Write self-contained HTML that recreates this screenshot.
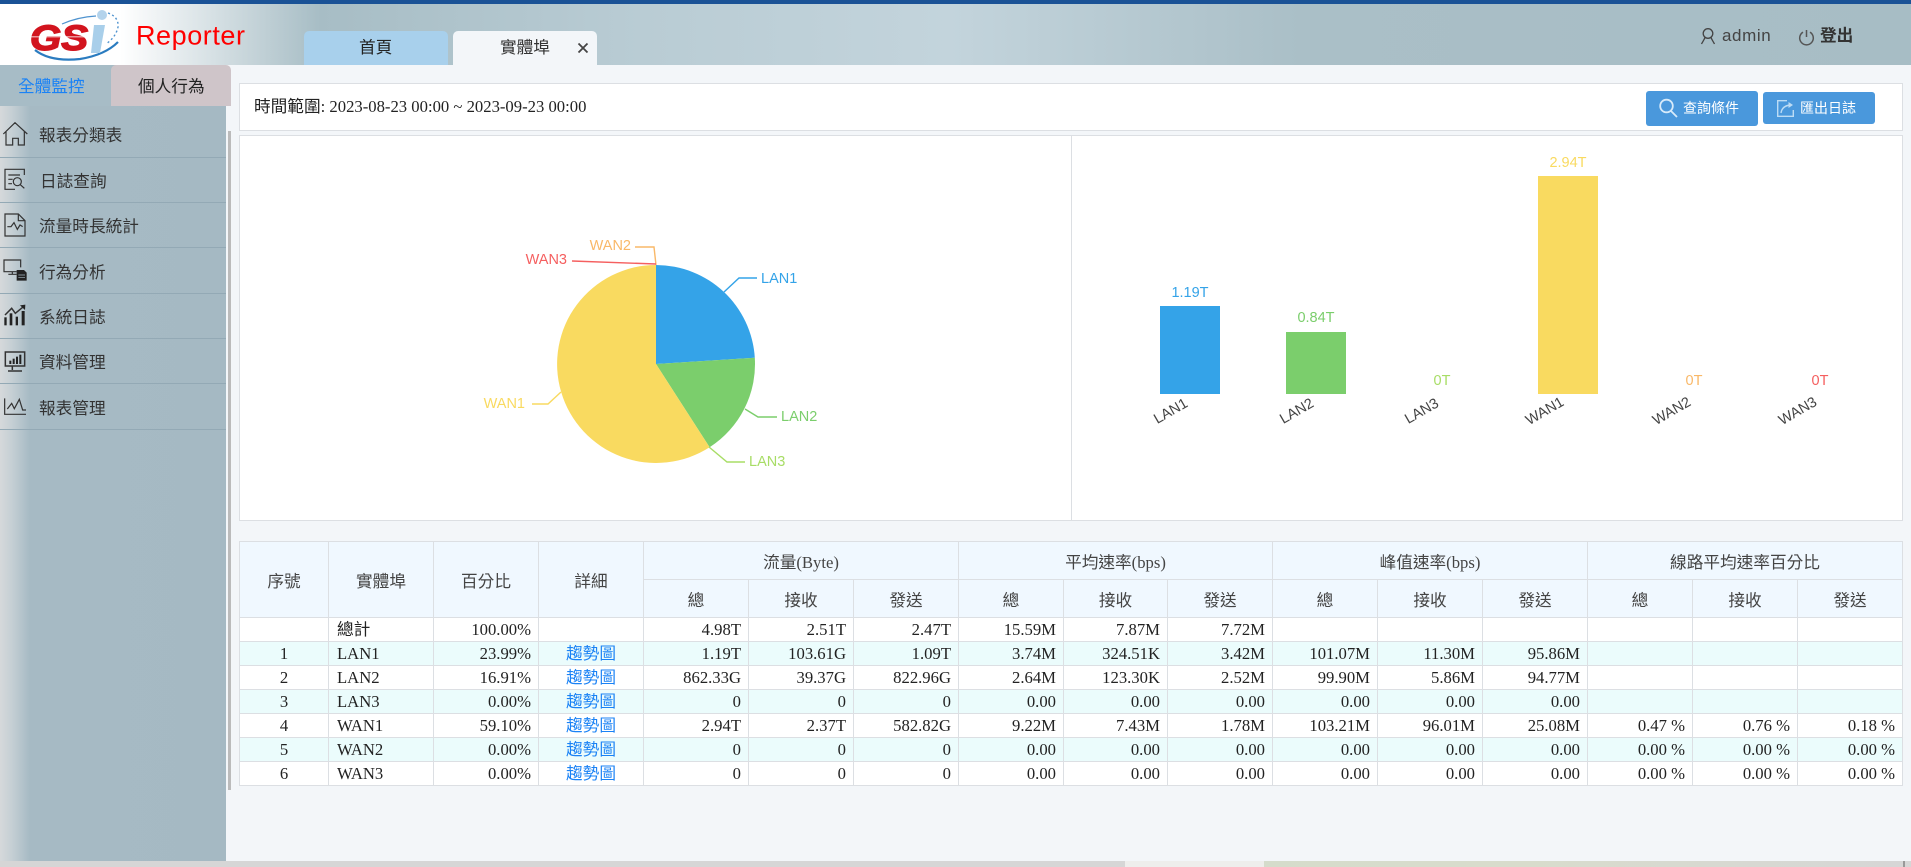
<!DOCTYPE html>
<html lang="zh-Hant"><head><meta charset="utf-8"><title>Reporter</title>
<style>
html,body{margin:0;padding:0;width:1911px;height:867px;overflow:hidden;background:#f3f6f9;font-family:"Liberation Sans","Noto Sans CJK TC",sans-serif;color:#333}
.a{position:absolute}
.t{position:absolute;white-space:nowrap;line-height:20px;font-size:16.67px}
#hdr{left:0;top:0;width:1911px;height:65px;background:linear-gradient(90deg,#fff 0,#fff 120px,#a7bdc5 320px,#b9ccd4 640px,#c3d4dc 950px,#aabfc7 1300px,#a7bdc5 1911px)}
#bar{left:0;top:0;width:1911px;height:4px;background:#1a5296}
.tab{position:absolute;top:31px;height:34px;width:144px;border-radius:5px 5px 0 0}
#side{left:0;top:106px;width:226px;height:755px;background:linear-gradient(90deg,#d6d9db 0,#c5cfd4 12px,#a6bac4 30px,#a5b9c3 226px)}
.ln{position:absolute;left:0;width:226px;height:1px;background:#93a9b5}
.p{position:absolute;background:#fff;border:1px solid #dcdfe3;box-sizing:border-box}
.btn{position:absolute;background:#4a98dc;border-radius:3px;color:#fff}
table{position:absolute;left:239px;top:541px;border-collapse:collapse;table-layout:fixed;width:1663px;font-family:"Liberation Serif","Noto Sans CJK TC",serif;font-size:16.67px;color:#222}
th,td{border:1px solid #dcdfe3;padding:0 7px 0 8px;overflow:hidden;white-space:nowrap}
th{background:#f0f8ff;font-weight:normal;color:#444;height:37px;padding:0}
td{height:23px;line-height:20px;text-align:right;background:#fff}
tr.o td{background:#ebfcfc}
td.c{text-align:center;padding:0}
td.l{text-align:left}
td a{color:#1a82f5;text-decoration:none}
svg text{font-family:"Liberation Sans",sans-serif}
</style></head><body>
<div class="a" id="hdr"></div><div class="a" id="bar"></div>

<svg class="a" style="left:0;top:0" width="260" height="65" viewBox="0 0 260 65">
<path d="M35 50Q50 62 80 59Q105 55 118 42" fill="none" stroke="#2b7cc0" stroke-width="2.200"/>
<path d="M62 24Q78 17 96 16" fill="none" stroke="#4f93cf" stroke-width="1.200"/>
<path d="M108 13Q119 17 118 27Q116 37 106 44" fill="none" stroke="#4f93cf" stroke-width="1.400" stroke-dasharray="2 2.500"/>
<path d="M94 25H105L100 53H91Z" fill="#a9cfea"/>
<circle cx="102" cy="15" r="5" fill="#b3d3ec"/>
<text x="30" y="50" font-size="35" font-weight="bold" font-style="italic" fill="#d2141e" stroke="#d2141e" stroke-width="1.400" textLength="58" lengthAdjust="spacingAndGlyphs">GS</text>
<rect x="29" y="36" width="58" height="1.500" fill="#fff" opacity=".55"/>
<text x="136" y="44.500" font-size="27" fill="#f00" textLength="109" lengthAdjust="spacing">Reporter</text>
</svg>

<div class="tab" style="left:304px;background:#a8d0ec"></div>
<div class="tab" style="left:453px;background:#f3f6f9"></div>
<div class="t" style="left:359px;top:38px;color:#222">首頁</div>
<div class="t" style="left:500px;top:38px;color:#333">實體埠</div>
<svg class="a" style="left:577px;top:42px" width="12" height="12"><path d="M1.500 1.500L10.500 10.500M10.500 1.500L1.500 10.500" stroke="#444" stroke-width="1.800"/></svg>

<svg class="a" style="left:1700px;top:27px" width="16" height="19" viewBox="0 0 16 19" fill="none" stroke="#444" stroke-width="1.300"><circle cx="8" cy="6.500" r="4.800"/><path d="M5 10.500C4 13 2.500 15 1.500 17M11 10.500C12 13 13.500 15 14.500 17"/></svg>
<div class="t" style="left:1722px;top:26px;letter-spacing:.6px;font-size:17px;color:#444">admin</div>
<svg class="a" style="left:1798px;top:29px" width="17" height="17" viewBox="0 0 17 17" fill="none" stroke="#555" stroke-width="1.500"><path d="M5 3.200A6.800 6.800 0 1 0 12 3.200"/><path d="M8.500 1V8"/></svg>
<div class="t" style="left:1820px;top:26px;font-weight:bold;color:#333">登出</div>

<div class="a" style="left:0;top:65px;width:226px;height:41px;background:#a7bcc6"></div>
<div class="a" style="left:111px;top:65px;width:120px;height:41px;background:#cfc5c9;border-radius:5px 5px 0 0"></div>
<div class="t" style="left:18px;top:77px;color:#1a82f5">全體監控</div>
<div class="t" style="left:138px;top:77px;color:#222">個人行為</div>
<div class="a" id="side"></div>
<div class="ln" style="top:157px"></div><div class="ln" style="top:202px"></div><div class="ln" style="top:247px"></div><div class="ln" style="top:293px"></div><div class="ln" style="top:338px"></div><div class="ln" style="top:383px"></div><div class="ln" style="top:429px"></div>
<div class="t" style="left:39px;top:126px">報表分類表</div>
<div class="t" style="left:40px;top:172px">日誌查詢</div>
<div class="t" style="left:39px;top:217px">流量時長統計</div>
<div class="t" style="left:39px;top:263px">行為分析</div>
<div class="t" style="left:39px;top:308px">系統日誌</div>
<div class="t" style="left:39px;top:353px">資料管理</div>
<div class="t" style="left:39px;top:399px">報表管理</div>
<svg class="a" style="left:0;top:110px" width="30" height="330" viewBox="0 0 90 990">
<g fill="none" stroke="#333" stroke-width="3.600">
<path d="M10 72L45 38L82 72M18 65V105H38V85H55V105H73V65"/>
<path d="M73 195V178H15V238H45M25 195H60M25 208H38M25 221H36"/><circle cx="52" cy="215" r="12"/><path d="M61 224L73 235"/>
<path d="M15 312H55L75 332V378H15ZM55 312V332H75M22 350H33L42 338L52 358L60 345L68 350"/>
<path d="M50 485H12V450H62V472M25 493H50M37 485V493"/>
<path d="M15 615L35 595L46 610L68 592" stroke-width="4.500"/>
<path d="M16 726H74V768H16ZM37 770V780M24 783H66" stroke-width="4.500"/>
<path d="M14 865V913H78M22 897L35 880L43 896L58 868L68 900H78"/>
</g>
<g fill="#222">
<path d="M50 480H72L80 488V512H50Z"/><path d="M55 495H75M55 503H75" stroke="#a5b9c3" stroke-width="2"/>
<path d="M60 586L76 584L75 600Z"/>
<rect x="13" y="622" width="7" height="24"/><rect x="29" y="610" width="8" height="36"/><rect x="47" y="620" width="7" height="26"/><rect x="65" y="603" width="9" height="43"/>
<rect x="28" y="752" width="6" height="10"/><rect x="38" y="746" width="6" height="16"/><rect x="48" y="740" width="6" height="22"/><rect x="58" y="734" width="6" height="28"/>
</g>
</svg>
<div class="a" style="left:228px;top:131px;width:3px;height:659px;background:#bbb"></div>

<div class="p" style="left:239px;top:83px;width:1664px;height:48px"></div>
<div class="t" style="left:254px;top:97px;font-family:'Liberation Serif','Noto Sans CJK TC',serif;color:#222">時間範圍: 2023-08-23 00:00 ~ 2023-09-23 00:00</div>
<div class="btn" style="left:1646px;top:91px;width:112px;height:35px"></div>
<div class="btn" style="left:1763px;top:92px;width:112px;height:32px"></div>
<svg class="a" style="left:1658px;top:96px" width="24" height="24" fill="none" stroke="#d8ebfa" stroke-width="1.800"><circle cx="8.500" cy="10" r="6.300"/><path d="M13 15L19 21"/></svg>
<svg class="a" style="left:1776px;top:99px" width="19" height="19" fill="none" stroke="#bcdcf5" stroke-width="1.400"><path d="M11 1.700H1.700V17.300H17.300V11"/><path d="M5 14Q6 7 14 6"/><path d="M12.500 3L17 6L12.500 9Z" fill="#bcdcf5" stroke="none"/></svg>
<div class="t" style="left:1683px;top:98px;font-size:14px;color:#fff">查詢條件</div>
<div class="t" style="left:1800px;top:98px;font-size:14px;color:#fff">匯出日誌</div>

<div class="p" style="left:239px;top:135px;width:1664px;height:386px"></div>
<div class="a" style="left:1071px;top:136px;width:1px;height:384px;background:#dcdfe3"></div>

<svg class="a" style="left:0;top:0" width="1911" height="867" viewBox="0 0 1911 867">
<path d="M656 364V265A99 99 0 0 1 754.800 357.700Z" fill="#34a3e8"/>
<path d="M656 364L754.800 357.700A99 99 0 0 1 709.600 447.300Z" fill="#7bce6c"/>
<path d="M656 364L709.600 447.300A99 99 0 1 1 656 265Z" fill="#f9da60"/>
<g fill="none" stroke-width="1.400">
<path d="M724 292L739 278H757" stroke="#34a3e8"/>
<path d="M745 409L758 417H777" stroke="#7bce6c"/>
<path d="M709 447L727 462H745" stroke="#a8dd66"/>
<path d="M561 392L548 404H532" stroke="#f9da60"/>
<path d="M656 265L654 247H635" stroke="#f9b868"/>
<path d="M656 264L572 261" stroke="#f55f5f"/>
</g>
<g font-size="14.500">
<text x="761" y="283" fill="#34a3e8">LAN1</text>
<text x="781" y="421" fill="#7bce6c">LAN2</text>
<text x="749" y="466" fill="#a8dd66">LAN3</text>
<text x="525" y="408" fill="#f9da60" text-anchor="end">WAN1</text>
<text x="631" y="250" fill="#f9b868" text-anchor="end">WAN2</text>
<text x="567" y="264" fill="#f55f5f" text-anchor="end">WAN3</text>
</g>
<rect x="1160" y="306" width="60" height="88" fill="#34a3e8"/>
<rect x="1286" y="332" width="60" height="62" fill="#7bce6c"/>
<rect x="1538" y="176" width="60" height="218" fill="#f9da60"/>
<g font-size="14.500" text-anchor="middle">
<text x="1190" y="297" fill="#34a3e8">1.19T</text>
<text x="1316" y="322" fill="#7bce6c">0.84T</text>
<text x="1442" y="385" fill="#a8dd66">0T</text>
<text x="1568" y="167" fill="#f9da60">2.94T</text>
<text x="1694" y="385" fill="#f9b868">0T</text>
<text x="1820" y="385" fill="#f55f5f">0T</text>
</g>
<g font-size="14.500" fill="#444" text-anchor="middle">
<text transform="translate(1173,415) rotate(-30)">LAN1</text>
<text transform="translate(1299,415) rotate(-30)">LAN2</text>
<text transform="translate(1424,415) rotate(-30)">LAN3</text>
<text transform="translate(1547,415) rotate(-30)">WAN1</text>
<text transform="translate(1674,415) rotate(-30)">WAN2</text>
<text transform="translate(1800,415) rotate(-30)">WAN3</text>
</g>
</svg>

<table>
<colgroup><col style="width:89px"><col style="width:105px"><col style="width:105px"><col style="width:105px"><col style="width:105px"><col style="width:105px"><col style="width:105px"><col style="width:105px"><col style="width:104px"><col style="width:105px"><col style="width:105px"><col style="width:105px"><col style="width:105px"><col style="width:105px"><col style="width:105px"><col style="width:105px"></colgroup>
<tr><th rowspan="2">序號</th><th rowspan="2">實體埠</th><th rowspan="2">百分比</th><th rowspan="2">詳細</th><th colspan="3">流量(Byte)</th><th colspan="3">平均速率(bps)</th><th colspan="3">峰值速率(bps)</th><th colspan="3">線路平均速率百分比</th></tr>
<tr><th>總</th><th>接收</th><th>發送</th><th>總</th><th>接收</th><th>發送</th><th>總</th><th>接收</th><th>發送</th><th>總</th><th>接收</th><th>發送</th></tr>
<tr><td class="c"></td><td class="l">總計</td><td>100.00%</td><td></td><td>4.98T</td><td>2.51T</td><td>2.47T</td><td>15.59M</td><td>7.87M</td><td>7.72M</td><td></td><td></td><td></td><td></td><td></td><td></td></tr>
<tr class="o"><td class="c">1</td><td class="l">LAN1</td><td>23.99%</td><td class="c"><a>趨勢圖</a></td><td>1.19T</td><td>103.61G</td><td>1.09T</td><td>3.74M</td><td>324.51K</td><td>3.42M</td><td>101.07M</td><td>11.30M</td><td>95.86M</td><td></td><td></td><td></td></tr>
<tr><td class="c">2</td><td class="l">LAN2</td><td>16.91%</td><td class="c"><a>趨勢圖</a></td><td>862.33G</td><td>39.37G</td><td>822.96G</td><td>2.64M</td><td>123.30K</td><td>2.52M</td><td>99.90M</td><td>5.86M</td><td>94.77M</td><td></td><td></td><td></td></tr>
<tr class="o"><td class="c">3</td><td class="l">LAN3</td><td>0.00%</td><td class="c"><a>趨勢圖</a></td><td>0</td><td>0</td><td>0</td><td>0.00</td><td>0.00</td><td>0.00</td><td>0.00</td><td>0.00</td><td>0.00</td><td></td><td></td><td></td></tr>
<tr><td class="c">4</td><td class="l">WAN1</td><td>59.10%</td><td class="c"><a>趨勢圖</a></td><td>2.94T</td><td>2.37T</td><td>582.82G</td><td>9.22M</td><td>7.43M</td><td>1.78M</td><td>103.21M</td><td>96.01M</td><td>25.08M</td><td>0.47 %</td><td>0.76 %</td><td>0.18 %</td></tr>
<tr class="o"><td class="c">5</td><td class="l">WAN2</td><td>0.00%</td><td class="c"><a>趨勢圖</a></td><td>0</td><td>0</td><td>0</td><td>0.00</td><td>0.00</td><td>0.00</td><td>0.00</td><td>0.00</td><td>0.00</td><td>0.00 %</td><td>0.00 %</td><td>0.00 %</td></tr>
<tr><td class="c">6</td><td class="l">WAN3</td><td>0.00%</td><td class="c"><a>趨勢圖</a></td><td>0</td><td>0</td><td>0</td><td>0.00</td><td>0.00</td><td>0.00</td><td>0.00</td><td>0.00</td><td>0.00</td><td>0.00 %</td><td>0.00 %</td><td>0.00 %</td></tr>
</table>

<div class="a" style="left:0;top:861px;width:1125px;height:6px;background:#d6d6d6"></div>
<div class="a" style="left:1125px;top:861px;width:139px;height:6px;background:#eeeeec"></div>
<div class="a" style="left:1264px;top:861px;width:647px;height:6px;background:linear-gradient(90deg,#d5dccb,#d8dccc 40%,#d6d6d6)"></div>
<div class="a" style="left:1903px;top:861px;width:2px;height:6px;background:#999"></div>
</body></html>
